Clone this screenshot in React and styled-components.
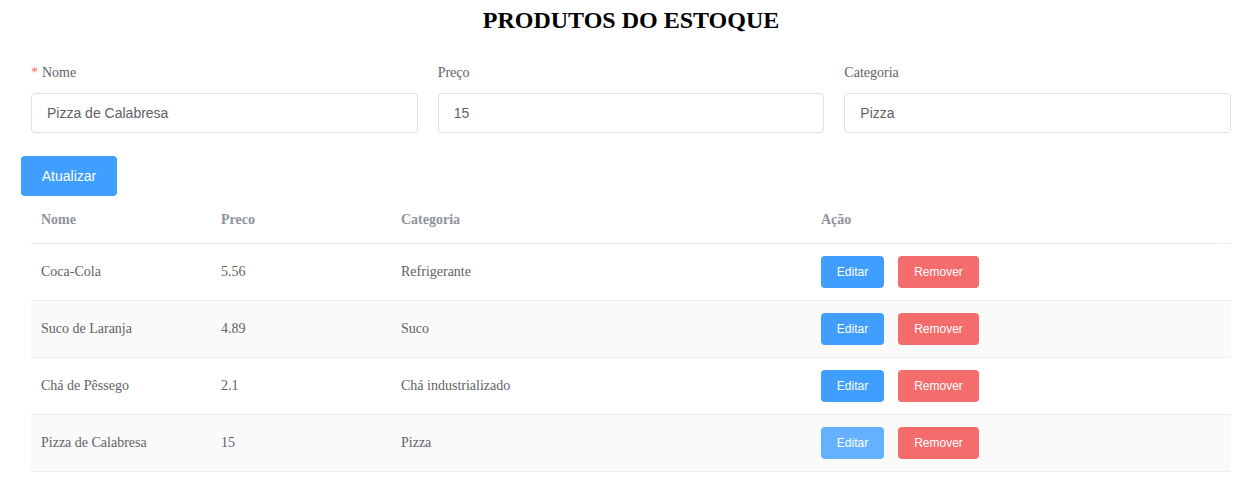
import React from "react";
import styled, { createGlobalStyle } from "styled-components";

const GlobalStyle = createGlobalStyle`
    body {
        margin: 0;
        background: #fff;
        font-family: "Liberation Serif", "Times New Roman", serif;
    }
`;

const ScPage = styled.div`
    width: 1220px;
    padding-left: 21px;
    height: 483px;
    overflow: hidden;
`;

const ScTitle = styled.h2`
    margin: 0;
    padding-top: 6px;
    font-size: 24px;
    line-height: 28px;
    font-weight: 700;
    text-align: center;
    color: #000;
`;

const ScFormRow = styled.div`
    display: grid;
    grid-template-columns: repeat(3, 1fr);
    margin-top: 19px;
`;

const ScFormItem = styled.div`
    padding: 0 10px;
`;

const ScLabel = styled.label`
    display: block;
    height: 40px;
    line-height: 40px;
    font-size: 14px;
    color: #606266;

    ${({ required }) =>
        required &&
        `
        &::before {
            content: "*";
            color: #f56c6c;
            margin-right: 4px;
        }
    `}
`;

const ScInput = styled.input`
    display: block;
    box-sizing: border-box;
    width: 100%;
    height: 40px;
    padding: 0 15px;
    border: 1px solid #dcdfe6;
    border-radius: 4px;
    font-family: "Liberation Sans", Arial, sans-serif;
    font-size: 14px;
    color: #606266;
    background: #fff;
    outline: none;
`;

const ScButton = styled.button`
    box-sizing: border-box;
    border: none;
    border-radius: 4px;
    color: #fff;
    font-family: "Liberation Sans", Arial, sans-serif;
    cursor: pointer;
    padding: 0;
    text-align: center;
    background: ${({ color }) => color};
    width: ${({ width }) => width}px;
    height: ${({ small }) => (small ? "32px" : "40px")};
    font-size: ${({ small }) => (small ? "12px" : "14px")};
    & + & {
        margin-left: 14px;
    }
`;

const ScSubmit = styled(ScButton)`
    display: block;
    margin-top: 23px;
`;

const ScTable = styled.table`
    margin: 0 10px;
    width: 1200px;
    border-collapse: collapse;
    table-layout: fixed;
    font-size: 14px;
    color: #606266;
`;

const ScTh = styled.th`
    text-align: left;
    font-weight: 700;
    color: #909399;
    padding: 12px 10px;
    line-height: 23px;
    border-bottom: 1px solid #ebeef5;
`;

const ScTr = styled.tr`
    background: ${({ striped }) => (striped ? "#fafafa" : "#fff")};
`;

const ScTd = styled.td`
    padding: 12px 10px;
    line-height: 32px;
    border-bottom: 1px solid #ebeef5;
    white-space: nowrap;
`;

const ScActions = styled.div`
    display: flex;
    align-items: center;
`;

const produtos = [
    { nome: "Coca-Cola", preco: "5.56", categoria: "Refrigerante" },
    { nome: "Suco de Laranja", preco: "4.89", categoria: "Suco" },
    { nome: "Chá de Pêssego", preco: "2.1", categoria: "Chá industrializado" },
    { nome: "Pizza de Calabresa", preco: "15", categoria: "Pizza", ativo: true },
];

export default function App() {
    return (
        <>
            <GlobalStyle />
            <ScPage>
                <ScTitle>PRODUTOS DO ESTOQUE</ScTitle>
                <ScFormRow>
                    <ScFormItem>
                        <ScLabel required>Nome</ScLabel>
                        <ScInput defaultValue="Pizza de Calabresa" />
                    </ScFormItem>
                    <ScFormItem>
                        <ScLabel>Preço</ScLabel>
                        <ScInput defaultValue="15" />
                    </ScFormItem>
                    <ScFormItem>
                        <ScLabel>Categoria</ScLabel>
                        <ScInput defaultValue="Pizza" />
                    </ScFormItem>
                </ScFormRow>
                <ScSubmit color="#409eff" width={96}>
                    Atualizar
                </ScSubmit>
                <ScTable>
                    <colgroup>
                        <col style={{ width: 180 }} />
                        <col style={{ width: 180 }} />
                        <col style={{ width: 420 }} />
                        <col style={{ width: 420 }} />
                    </colgroup>
                    <thead>
                        <tr>
                            <ScTh>Nome</ScTh>
                            <ScTh>Preco</ScTh>
                            <ScTh>Categoria</ScTh>
                            <ScTh>Ação</ScTh>
                        </tr>
                    </thead>
                    <tbody>
                        {produtos.map((p, i) => (
                            <ScTr key={p.nome} striped={i % 2 === 1}>
                                <ScTd>{p.nome}</ScTd>
                                <ScTd>{p.preco}</ScTd>
                                <ScTd>{p.categoria}</ScTd>
                                <ScTd>
                                    <ScActions>
                                        <ScButton
                                            small
                                            width={63}
                                            color={p.ativo ? "#66b1ff" : "#409eff"}
                                        >
                                            Editar
                                        </ScButton>
                                        <ScButton small width={81} color="#f56c6c">
                                            Remover
                                        </ScButton>
                                    </ScActions>
                                </ScTd>
                            </ScTr>
                        ))}
                    </tbody>
                </ScTable>
            </ScPage>
        </>
    );
}
